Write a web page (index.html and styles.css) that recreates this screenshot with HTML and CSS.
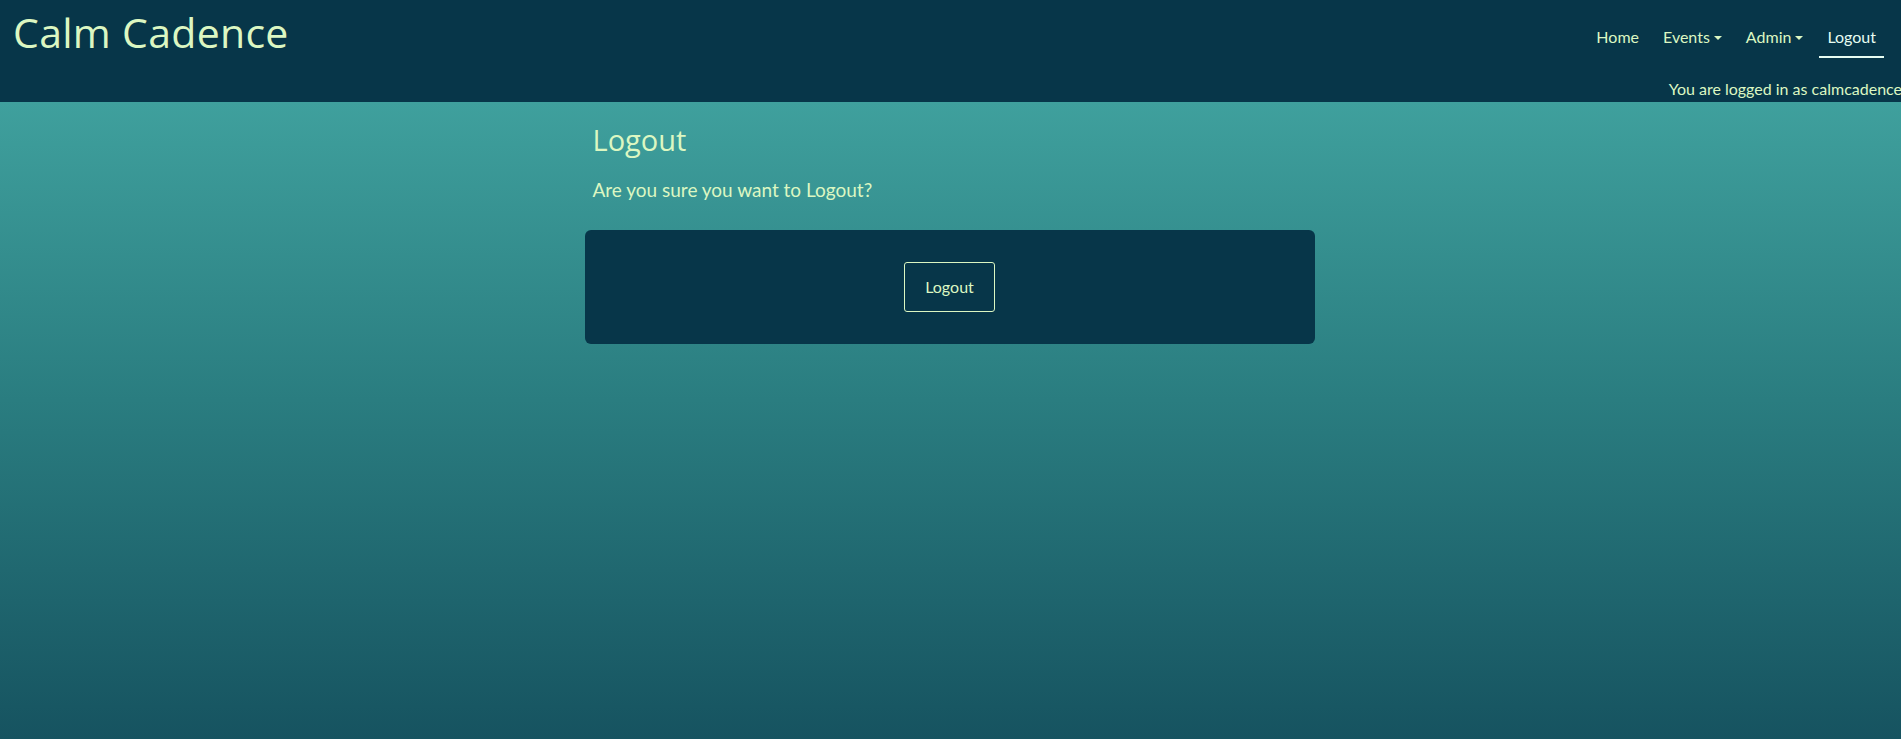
FILE: index.html
```html
<!DOCTYPE html>
<html lang="en">
<head>
<meta charset="utf-8">
<title>Calm Cadence - Logout</title>
<link rel="stylesheet" href="styles.css">
</head>
<body>
<header class="site-header">
  <div class="header-top">
    <a class="brand" href="#">Calm Cadence</a>
    <nav class="nav">
      <a class="nav-link" href="#">Home</a>
      <a class="nav-link dropdown" href="#">Events</a>
      <a class="nav-link dropdown" href="#">Admin</a>
      <a class="nav-link active" href="#">Logout</a>
    </nav>
  </div>
  <div class="login-status">You are logged in as calmcadence</div>
</header>
<main class="content">
  <h1 class="page-title">Logout</h1>
  <p class="lead">Are you sure you want to Logout?</p>
  <div class="card">
    <button class="btn-outline" type="button">Logout</button>
  </div>
</main>
</body>
</html>
```

FILE: styles.css
```css
html, body {
  margin: 0;
  padding: 0;
}
body {
  min-height: 739px;
  font-family: "Lato", "Liberation Sans", sans-serif;
  color: #dcf7c2;
  background: linear-gradient(to bottom, #3fa09d 102px, #2a7d80 400px, #165360 739px);
  overflow: hidden;
}
.site-header {
  background: #073649;
  height: 102px;
  display: flex;
  flex-direction: column;
}
.header-top {
  display: flex;
  justify-content: space-between;
  align-items: flex-start;
  height: 77px;
}
.brand {
  font-family: "Open Sans", "Noto Sans", sans-serif;
  font-size: 41px;
  font-weight: 400;
  color: #dcf7c2;
  text-decoration: none;
  margin-left: 13px;
  margin-top: 8px;
  line-height: 1.2;
  letter-spacing: 0.3px;
}
.nav {
  display: flex;
  gap: 8px;
  margin-right: 17px;
  margin-top: 25px;
}
.nav-link {
  font-size: 16px;
  line-height: 24px;
  padding: 0 8px 7px;
  color: #dcf7c2;
  text-decoration: none;
  border-bottom: 2px solid transparent;
}
.nav-link.dropdown::after {
  content: "";
  display: inline-block;
  margin-left: 4px;
  vertical-align: 3px;
  border-top: 4px solid currentColor;
  border-left: 4px solid transparent;
  border-right: 4px solid transparent;
}
.nav-link.active {
  color: #e6fdf2;
  border-bottom-color: #e6fdf2;
}
.login-status {
  text-align: right;
  font-size: 16px;
  line-height: 24px;
  white-space: nowrap;
  margin-right: -1px;
}
.content {
  width: 730px;
  margin: 0 auto;
  padding-top: 20px;
  position: relative;
  left: -1px;
}
.page-title {
  font-family: "Open Sans", "Noto Sans", sans-serif;
  font-weight: 400;
  font-size: 29px;
  line-height: 36px;
  margin: 0 0 18px 8px;
}
.lead {
  font-size: 19px;
  line-height: 28px;
  margin: 0 0 26px 8px;
}
.card {
  background: #073649;
  border-radius: 6px;
  padding: 32px;
  display: flex;
  justify-content: center;
}
.btn-outline {
  font-family: "Lato", "Liberation Sans", sans-serif;
  font-size: 16px;
  line-height: 24px;
  color: #dcf7c2;
  background: transparent;
  border: 1px solid #dcf7c2;
  border-radius: 3px;
  padding: 12px 20px;
  cursor: pointer;
}
```
